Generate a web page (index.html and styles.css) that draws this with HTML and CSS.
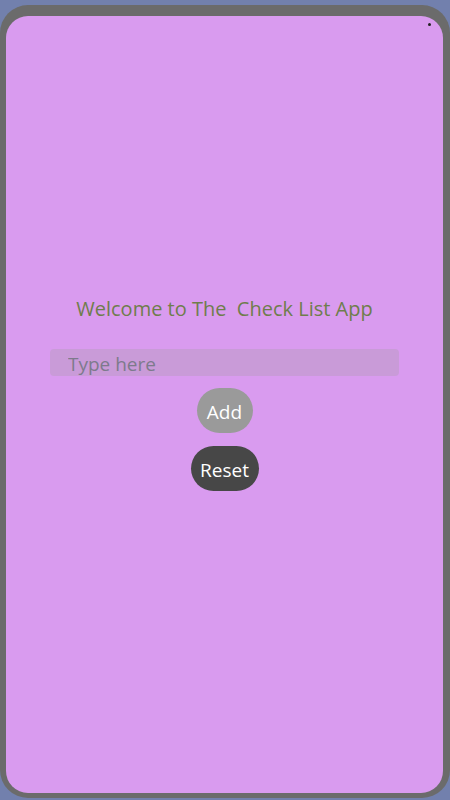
FILE: index.html
```html
<!DOCTYPE html>
<html>
<head>
<meta charset="utf-8">
<link rel="stylesheet" href="styles.css">
</head>
<body>
  <div class="device">
    <div class="screen">
      <span class="camera-dot"></span>
      <div class="content">
        <p class="title">Welcome to The&nbsp; Check List App</p>
        <input class="task-input" type="text" placeholder="Type here">
        <button class="btn btn-add">Add</button>
        <button class="btn btn-reset">Reset</button>
      </div>
    </div>
  </div>
</body>
</html>
```

FILE: styles.css
```css
html, body {
  margin: 0;
  padding: 0;
}
body {
  background: #7280ad;
  width: 450px;
  height: 800px;
  overflow: hidden;
  font-family: "Open Sans", "Noto Sans", sans-serif;
}
.device {
  box-sizing: border-box;
  margin-top: 5px;
  height: 793px;
  background: #6b6b6b;
  border-radius: 28px;
  padding: 11px 7px 5px 6px;
}
.screen {
  position: relative;
  height: 100%;
  background: #d99bef;
  border-radius: 22px;
  display: flex;
  flex-direction: column;
}
.camera-dot {
  position: absolute;
  left: 422px;
  top: 7px;
  width: 3px;
  height: 3px;
  border-radius: 50%;
  background: #222;
}
.content {
  display: flex;
  flex-direction: column;
  align-items: center;
  padding-top: 280px;
}
.title {
  margin: 0;
  font-size: 20px;
  line-height: 26px;
  color: #6f7d4c;
  white-space: pre;
}
.task-input {
  box-sizing: border-box;
  margin-top: 27px;
  width: 349px;
  height: 27px;
  border: none;
  outline: none;
  border-radius: 4px;
  background: #c99bd8;
  padding: 3px 0 0 18px;
  font-family: inherit;
  font-size: 19px;
  color: #555;
}
.task-input::placeholder {
  color: #7d7a8c;
}
.btn {
  box-sizing: border-box;
  border: none;
  border-radius: 23px;
  height: 45px;
  padding: 2px 0 0;
  font-family: inherit;
  font-size: 19px;
  color: #ffffff;
}
.btn-add {
  margin-top: 12px;
  width: 56px;
  background: #9a9a9a;
}
.btn-reset {
  margin-top: 13px;
  width: 68px;
  background: #474747;
}
```
